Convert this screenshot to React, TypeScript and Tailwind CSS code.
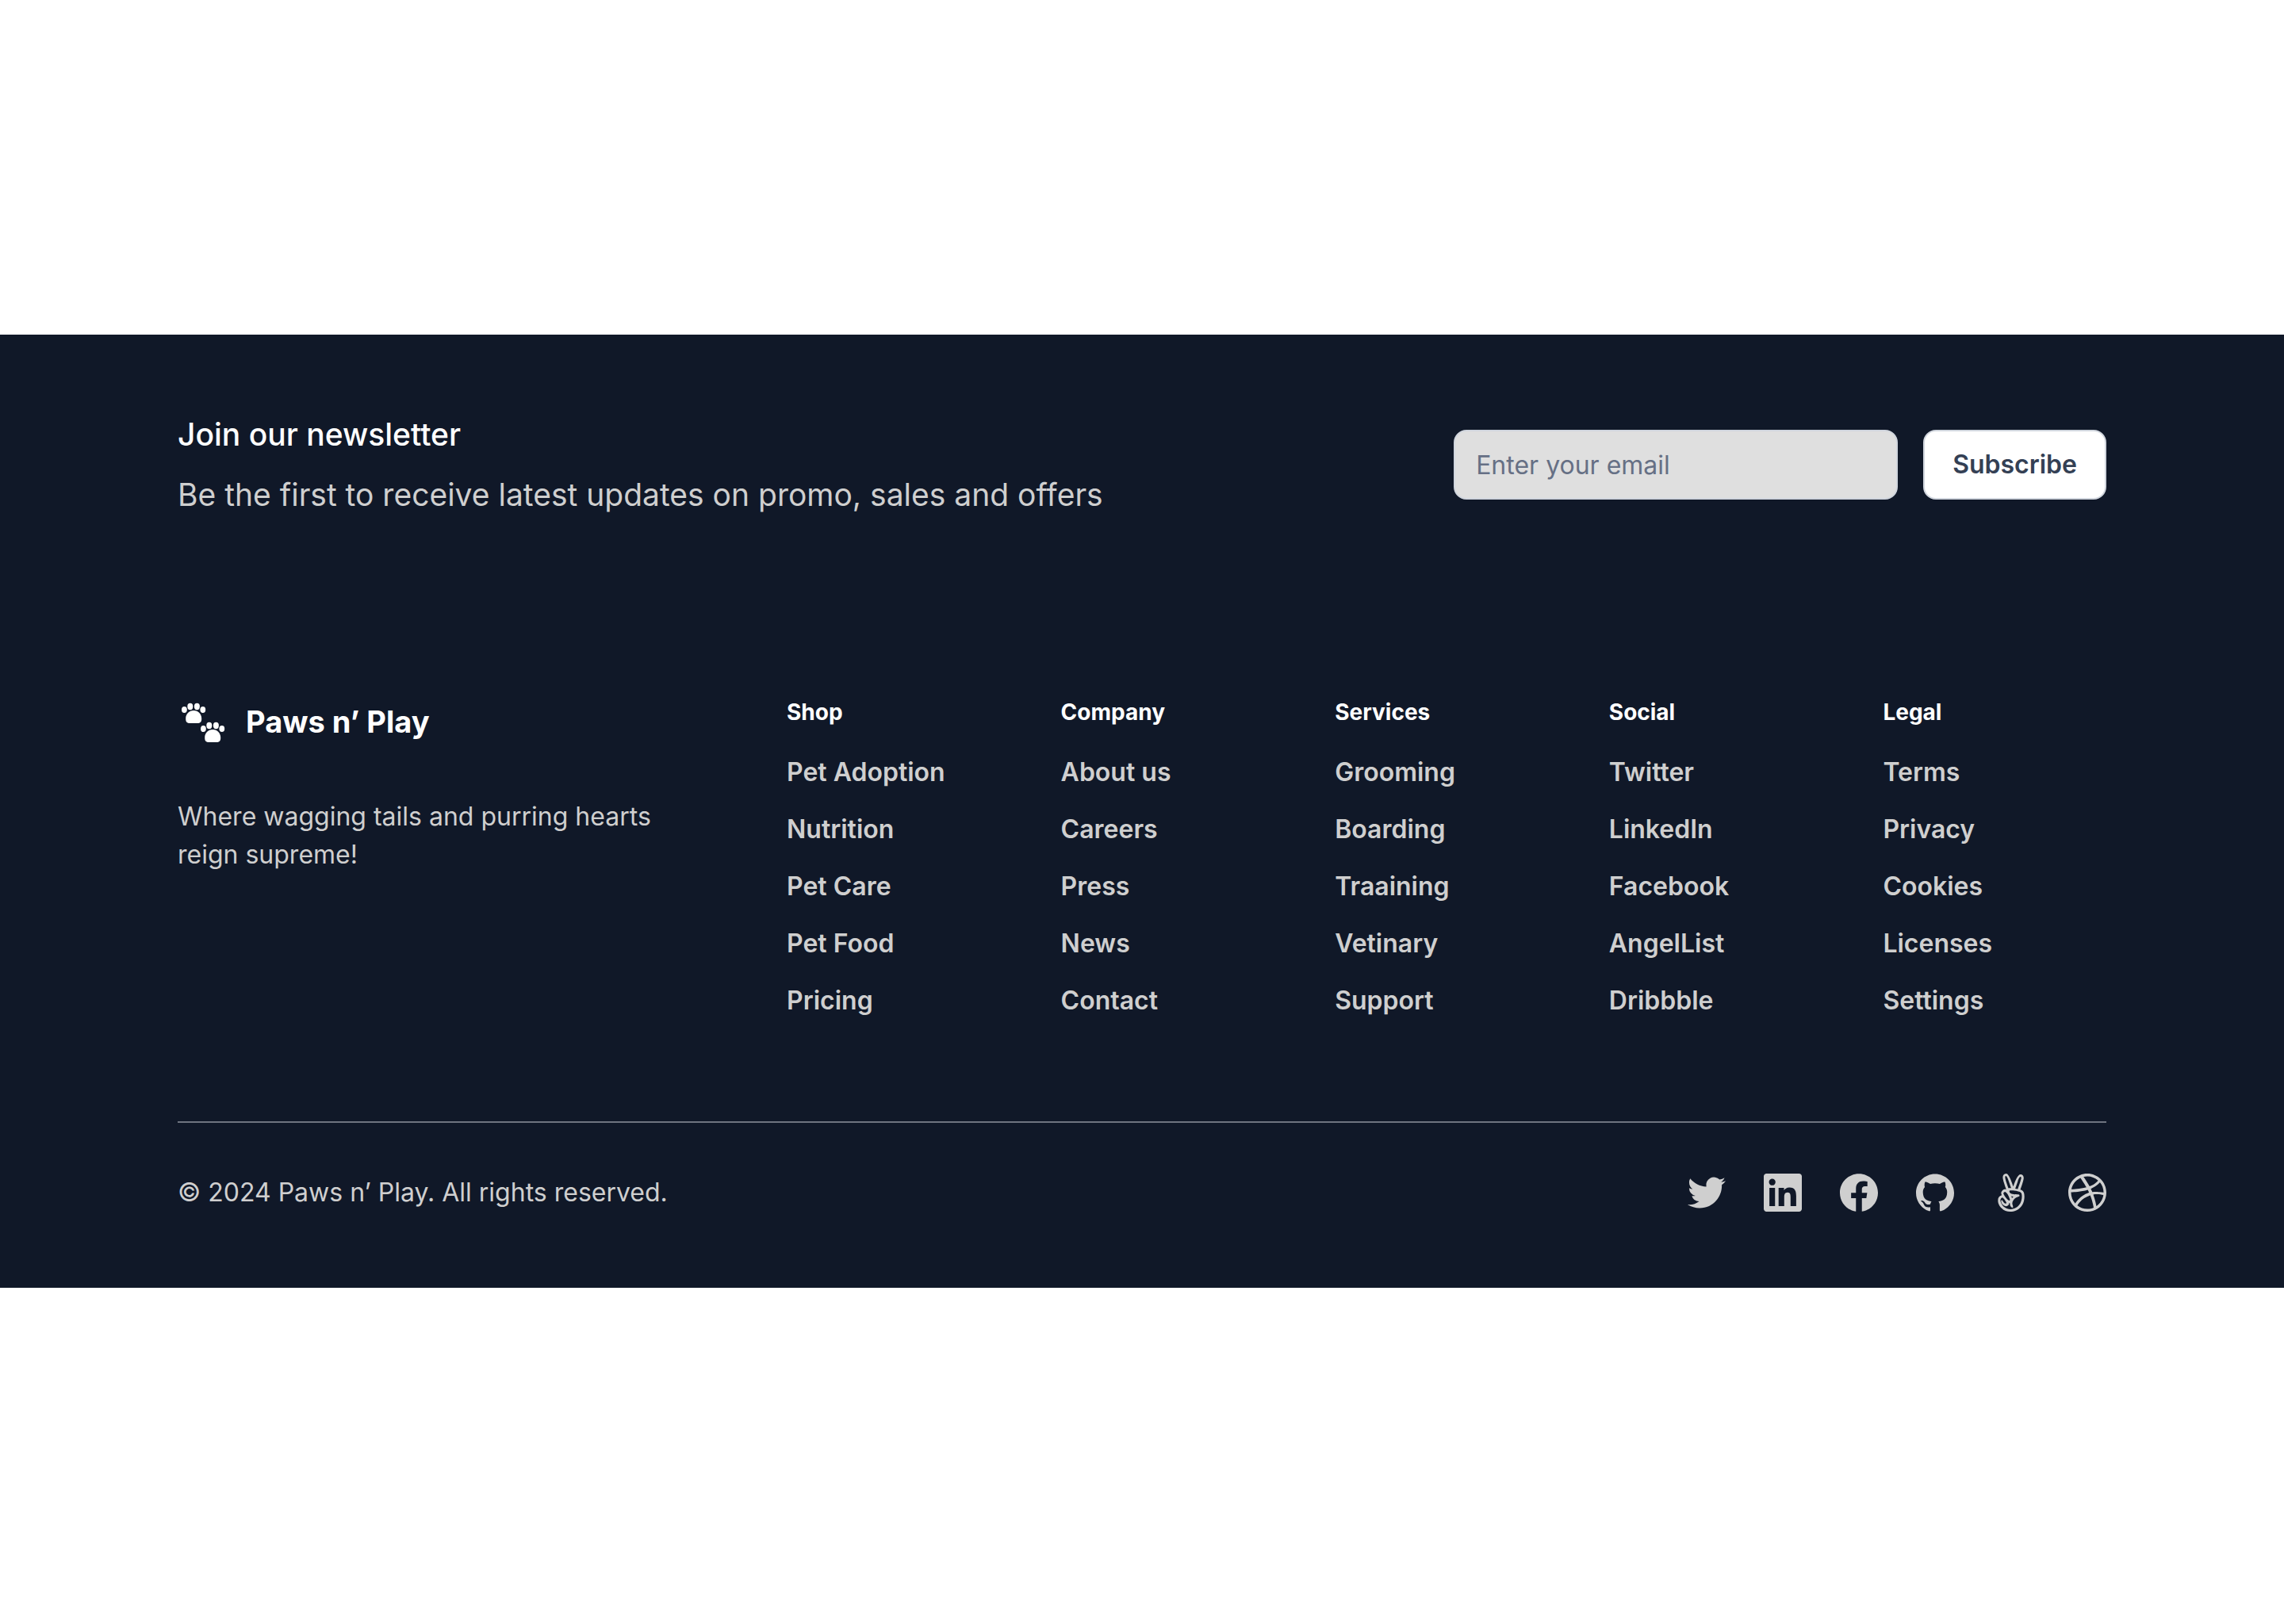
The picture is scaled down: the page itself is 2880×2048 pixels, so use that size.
import React from "react";
import { FaAngellist } from "react-icons/fa";
import { SiDribbble, SiGithub } from "react-icons/si";

const columns = [
  { title: "Shop", links: ["Pet Adoption", "Nutrition", "Pet Care", "Pet Food", "Pricing"] },
  { title: "Company", links: ["About us", "Careers", "Press", "News", "Contact"] },
  { title: "Services", links: ["Grooming", "Boarding", "Traaining", "Vetinary", "Support"] },
  { title: "Social", links: ["Twitter", "LinkedIn", "Facebook", "AngelList", "Dribbble"] },
  { title: "Legal", links: ["Terms", "Privacy", "Cookies", "Licenses", "Settings"] },
];

function Glyph({ d }: { d: string }) {
  return (
    <svg viewBox="0 0 24 24" className="size-12" fill="currentColor" aria-hidden="true">
      <path d={d} />
    </svg>
  );
}

const TWITTER =
  "M23.953 4.57a10 10 0 01-2.825.775 4.958 4.958 0 002.163-2.723c-.951.555-2.005.959-3.127 1.184a4.92 4.92 0 00-8.384 4.482C7.69 8.095 4.067 6.13 1.64 3.162a4.822 4.822 0 00-.666 2.475c0 1.71.87 3.213 2.188 4.096a4.904 4.904 0 01-2.228-.616v.06a4.923 4.923 0 003.946 4.827 4.996 4.996 0 01-2.212.085 4.936 4.936 0 004.604 3.417 9.867 9.867 0 01-6.102 2.105c-.39 0-.779-.023-1.17-.067a13.995 13.995 0 007.557 2.209c9.053 0 13.998-7.496 13.998-13.985 0-.21 0-.42-.015-.63A9.935 9.935 0 0024 4.59z";
const LINKEDIN =
  "M20.447 20.452h-3.554v-5.569c0-1.328-.027-3.037-1.852-3.037-1.853 0-2.136 1.445-2.136 2.939v5.667H9.351V9h3.414v1.561h.046c.477-.9 1.637-1.85 3.37-1.85 3.601 0 4.267 2.37 4.267 5.455v6.286zM5.337 7.433a2.062 2.062 0 01-2.063-2.065 2.064 2.064 0 112.063 2.065zm1.782 13.019H3.555V9h3.564v11.452zM22.225 0H1.771C.792 0 0 .774 0 1.729v20.542C0 23.227.792 24 1.771 24h20.451C23.2 24 24 23.227 24 22.271V1.729C24 .774 23.2 0 22.222 0h.003z";
const FACEBOOK =
  "M24 12.073c0-6.627-5.373-12-12-12s-12 5.373-12 12c0 5.99 4.388 10.954 10.125 11.854v-8.385H7.078v-3.47h3.047V9.43c0-3.007 1.792-4.669 4.533-4.669 1.312 0 2.686.235 2.686.235v2.953H15.83c-1.491 0-1.956.925-1.956 1.874v2.25h3.328l-.532 3.47h-2.796v8.385C19.612 23.027 24 18.062 24 12.073z";

const socials = [
  { name: "Twitter", icon: <Glyph d={TWITTER} /> },
  { name: "LinkedIn", icon: <Glyph d={LINKEDIN} /> },
  { name: "Facebook", icon: <Glyph d={FACEBOOK} /> },
  { name: "GitHub", icon: <SiGithub className="size-12" /> },
  { name: "AngelList", icon: <FaAngellist className="size-12" /> },
  { name: "Dribbble", icon: <SiDribbble className="size-12" /> },
];

function Paw({ x, y }: { x: number; y: number }) {
  return (
    <g transform={`translate(${x} ${y})`}>
      <ellipse cx="3.4" cy="8" rx="3.4" ry="4.1" />
      <ellipse cx="10.8" cy="4" rx="3.5" ry="4.2" />
      <ellipse cx="19.4" cy="4" rx="3.5" ry="4.2" />
      <ellipse cx="26.8" cy="8" rx="3.4" ry="4.1" />
      <path d="M15.2 9c5.8 0 10 4.4 10 10.2 0 4.2-1.6 5.8-5.4 5.8h-9.2c-3.8 0-5.4-1.6-5.4-5.8 0-5.8 4.2-10.2 10-10.2z" />
    </g>
  );
}

function Logo() {
  return (
    <a href="#" className="flex items-center gap-[22px] text-white">
      <svg viewBox="0 0 64 64" className="size-16" fill="currentColor" aria-hidden="true">
        <Paw x={5} y={9} />
        <Paw x={29} y={33} />
      </svg>
      <span className="text-[38px]/[60px] font-bold">Paws n’ Play</span>
    </a>
  );
}

export default function App() {
  return (
    <div className="flex min-h-screen flex-col justify-center bg-white pb-0.5 font-['Inter',sans-serif]">
      <footer className="bg-[#101828] px-56 pt-24 pb-24 text-[32px]/[48px] text-[#cfcfcf]">
        <section className="flex items-center justify-between gap-16">
          <div className="flex flex-col gap-4 text-[39px]/[60px]">
            <h2 className="font-medium text-white">Join our newsletter</h2>
            <p>Be the first to receive latest updates on promo, sales and offers</p>
          </div>
          <form className="flex gap-8" onSubmit={(e) => e.preventDefault()}>
            <input
              type="email"
              aria-label="Email address"
              placeholder="Enter your email"
              className="h-[88px] w-[560px] rounded-2xl border-2 border-[#d0d5dd] bg-[#dfdfdf] px-[26px] text-[#344054] placeholder:text-[#667085]"
            />
            <button
              type="submit"
              className="h-[88px] rounded-2xl border-2 border-[#d0d5dd] bg-white px-[35px] font-semibold text-[#344054]"
            >
              Subscribe
            </button>
          </form>
        </section>

        <div className="mt-56 flex gap-32">
          <div className="flex w-[640px] flex-col items-start gap-16">
            <Logo />
            <p>Where wagging tails and purring hearts reign supreme!</p>
          </div>
          <nav aria-label="Footer" className="grid flex-1 grid-cols-5 gap-16">
            {columns.map((column) => (
              <div key={column.title} className="flex flex-col gap-8">
                <h3 className="text-[28px]/[40px] font-bold text-white">{column.title}</h3>
                <ul className="flex flex-col gap-6">
                  {column.links.map((link) => (
                    <li key={link}>
                      <a href="#" className="block font-semibold whitespace-nowrap">
                        {link}
                      </a>
                    </li>
                  ))}
                </ul>
              </div>
            ))}
          </nav>
        </div>

        <div className="mt-32 flex items-center justify-between border-t-2 border-[#6f7480] pt-16">
          <p>© 2024 Paws n’ Play. All rights reserved.</p>
          <ul className="flex gap-12">
            {socials.map((social) => (
              <li key={social.name}>
                <a href="#" aria-label={social.name} className="block">
                  {social.icon}
                </a>
              </li>
            ))}
          </ul>
        </div>
      </footer>
    </div>
  );
}
